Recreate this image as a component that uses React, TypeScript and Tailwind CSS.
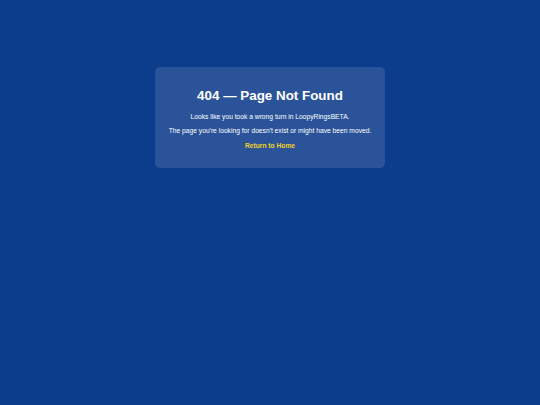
export default function App() {
    return (
        <div className="min-h-[405px] w-full bg-[#0c3c8c] flex justify-center" style={{ fontFamily: '"Liberation Sans", Arial, sans-serif' }}>
            <div className="mt-[67px] w-[230px] h-[101px] rounded-[5px] bg-[#2b5399] text-white text-center pt-[20px]">
                <h1 className="text-[13.4px] font-bold leading-[18px]">404 — Page Not Found</h1>
                <p className="text-[6.7px] mt-[7px] leading-[9px]">Looks like you took a wrong turn in LoopyRingsBETA.</p>
                <p className="text-[6.7px] mt-[5px] leading-[9px]">The page you're looking for doesn't exist or might have been moved.</p>
                <a href="#" className="block text-[6.7px] font-bold text-[#f5d31f] mt-[6px] leading-[9px]">Return to Home</a>
            </div>
        </div>
    );
}
